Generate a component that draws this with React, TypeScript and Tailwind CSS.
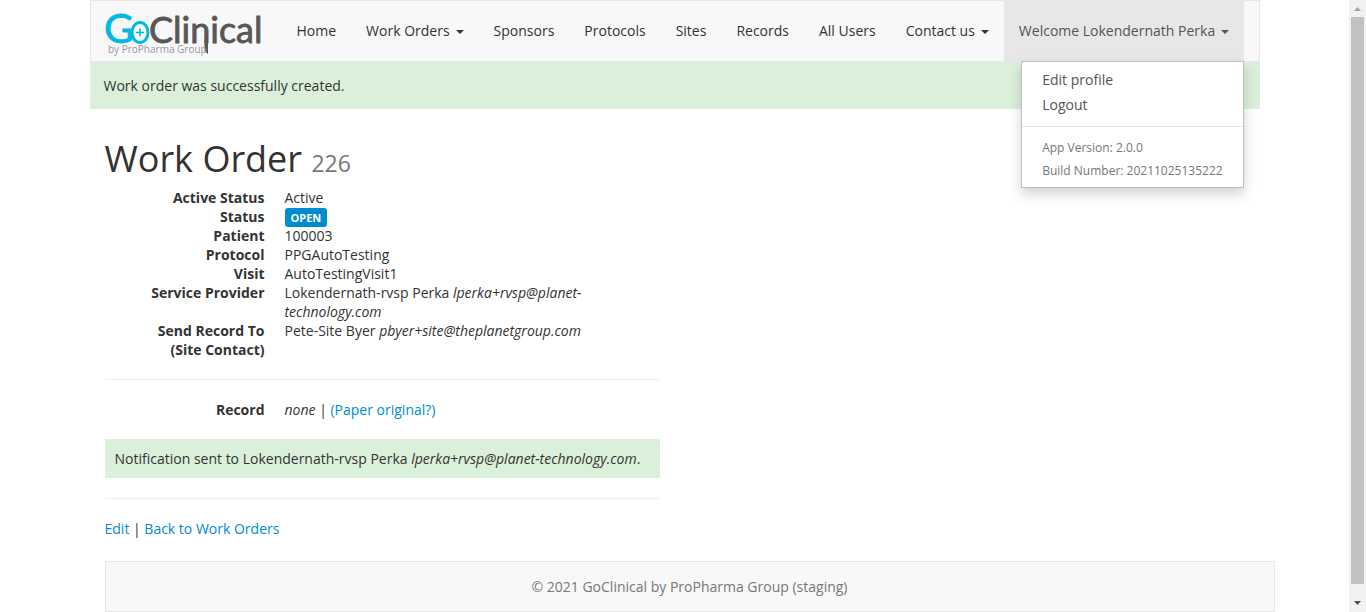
import React from "react";

const details: [string, React.ReactNode][] = [
  ["Active Status", "Active"],
  [
    "Status",
    <span className="rounded-[3px] bg-[#008cd0] px-[6px] py-[2px] text-[11px] leading-[11px] font-bold text-white">OPEN</span>,
  ],
  ["Patient", "100003"],
  ["Protocol", "PPGAutoTesting"],
  ["Visit", "AutoTestingVisit1"],
  ["Service Provider", <>Lokendernath-rvsp Perka <em>lperka+rvsp@planet-technology.com</em></>],
  ["Send Record To (Site Contact)", <>Pete-Site Byer <em>pbyer+site@theplanetgroup.com</em></>],
];

const links = [
  { label: "Home" },
  { label: "Work Orders", menu: true },
  { label: "Sponsors" },
  { label: "Protocols" },
  { label: "Sites" },
  { label: "Records" },
  { label: "All Users" },
  { label: "Contact us", menu: true },
];

function Caret() {
  return (
    <svg className="ml-[6px] inline-block h-1 w-2 fill-current align-middle" viewBox="0 0 8 4" aria-hidden="true">
      <path d="M0 0h8L4 4z" />
    </svg>
  );
}

function Logo() {
  return (
    <svg className="h-[60px] w-[160px] overflow-visible" viewBox="0 0 160 60" role="img" aria-label="GoClinical by ProPharma Group">
      <g fontFamily="Lato, sans-serif" strokeWidth="0.8">
        <text x="-2" y="42" fontSize="41" fill="#00b9e4" stroke="#00b9e4">G</text>
        <text x="43" y="42" fontSize="36" fill="#575756" stroke="#575756">Clinical</text>
      </g>
      <path d="M98.500 38v12l3.500 3V38z" fill="#575756" />
      <ellipse cx="34" cy="31.500" rx="8" ry="10" fill="none" stroke="#00b9e4" strokeWidth="3" />
      <path d="M34 27.500v8M30 31.500h8" stroke="#00b9e4" strokeWidth="1.500" />
      <text x="2" y="52" fontSize="10" fill="#999" fontFamily="'Open Sans', sans-serif">by ProPharma Group</text>
    </svg>
  );
}

function DetailRow({ label, children }: { label: string; children: React.ReactNode }) {
  return (
    <div className="flex gap-5">
      <dt className="w-40 shrink-0 pl-8 text-right font-bold">{label}</dt>
      <dd className="min-w-0 flex-1">{children}</dd>
    </div>
  );
}

export default function App() {
  return (
    <div className="flex min-h-screen bg-white font-['Open_Sans',sans-serif] text-[14px] leading-[19px] text-[#333]">
      <div className="min-w-0 flex-1">
        <div className="mx-auto max-w-[1170px]">
          <nav className="flex h-[62px] border border-[#e7e7e7] bg-[#f8f8f8] px-[15px]">
            <a href="#" className="w-[176px] shrink-0"><Logo /></a>
            <ul className="flex">
              {links.map((l) => (
                <li key={l.label}>
                  <a href="#" className="block px-[15px] py-5 whitespace-nowrap">
                    {l.label}
                    {l.menu && <Caret />}
                  </a>
                </li>
              ))}
            </ul>
            <div className="relative ml-auto flex">
              <button type="button" aria-expanded="true" className="flex items-start bg-[#e7e7e7] px-[15px] py-5 whitespace-nowrap text-[#555]">
                <span>
                  Welcome Lokendernath Perka
                  <Caret />
                </span>
              </button>
              <div className="absolute top-full right-0 z-10 min-w-[223px] border border-[#bfbfbf] bg-white py-[5px] whitespace-nowrap text-[#555] shadow-[0_6px_12px_rgba(0,0,0,0.18)]">
                <a href="#" className="block px-5 py-[3px]">Edit profile</a>
                <a href="#" className="block px-5 py-[3px]">Logout</a>
                <hr className="my-[9px] border-[#e5e5e5]" />
                <p className="px-5 py-[2px] text-[12px] text-[#777]">App Version: 2.0.0</p>
                <p className="px-5 py-[2px] text-[12px] text-[#777]">Build Number: 20211025135222</p>
              </div>
            </div>
          </nav>
          <p role="status" className="bg-[#dbf0da] p-[14px]">Work order was successfully created.</p>
          <main className="px-[15px] pt-7">
            <div className="w-1/2 pr-[15px]">
              <h1 className="mb-[3px] text-[36px] leading-[44px]">
                Work Order <small className="text-[23px] text-[#777]">226</small>
              </h1>
              <dl>
                {details.map(([label, value]) => (
                  <DetailRow key={label} label={label}>{value}</DetailRow>
                ))}
              </dl>
              <hr className="my-5 border-[#eee]" />
              <dl>
                <DetailRow label="Record">
                  <em>none</em> | <a href="#" className="text-[#008cd0]">(Paper original?)</a>
                </DetailRow>
              </dl>
              <p className="mt-5 bg-[#dbf0da] p-[10px]">
                Notification sent to Lokendernath-rvsp Perka <em>lperka+rvsp@planet-technology.com</em>.
              </p>
              <hr className="my-5 border-[#eee]" />
              <p>
                <a href="#" className="text-[#008cd0]">Edit</a> | <a href="#" className="text-[#008cd0]">Back to Work Orders</a>
              </p>
            </div>
          </main>
          <footer className="-mr-[15px] mt-[23px] ml-[15px] border border-[#e7e7e7] bg-[#f8f8f8] py-[15px] text-center text-[#777]">
            © 2021 GoClinical by ProPharma Group (staging)
          </footer>
        </div>
      </div>
      <div className="sticky top-0 flex h-screen w-[17px] shrink-0 flex-col items-center bg-[#f1f1f1]" aria-hidden="true">
        <svg className="h-[17px] w-[17px] shrink-0" viewBox="0 0 17 17"><path d="M5 11h7L8.500 7z" fill="#a3a3a3" /></svg>
        <div className="w-[13px] flex-1 bg-[#c1c1c1]" />
        <svg className="mt-[11px] h-[17px] w-[17px] shrink-0" viewBox="0 0 17 17"><path d="M5 6h7L8.500 10z" fill="#505050" /></svg>
      </div>
    </div>
  );
}
